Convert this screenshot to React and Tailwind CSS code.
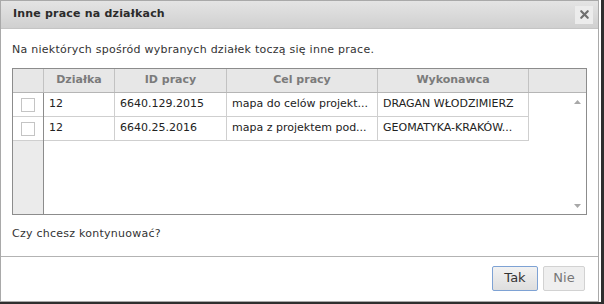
import { X } from 'lucide-react';

const rows = [
  { dzialka: '12', id: '6640.129.2015', cel: 'mapa do celów projekt...', wyk: 'DRAGAN WŁODZIMIERZ' },
  { dzialka: '12', id: '6640.25.2016', cel: 'mapa z projektem pod...', wyk: 'GEOMATYKA-KRAKÓW...' },
];

function Cell({ className = '', children }) {
  return (
    <div className={`h-full flex items-center px-[5px] border-r border-[#cfcfcf] overflow-hidden whitespace-nowrap ${className}`}>
      {children}
    </div>
  );
}

export default function App() {
  return (
    <div
      className="w-[604px] h-[304px] bg-white border-r-[3px] border-b-[2px] border-[#2f2f2f] text-[#333]"
      style={{ fontFamily: 'Verdana, "DejaVu Sans", sans-serif' }}
    >
      <div className="w-[599px] h-[302px] border border-[#a9a9a9] flex flex-col">
        {/* title */}
        <div className="h-[28px] flex items-center justify-between pl-[12px] pr-[5px] bg-gradient-to-b from-[#e4e4e4] to-[#d0d0d0] border-b border-[#c4c4c4]">
          <span className="text-[11px] font-bold text-[#2b2b2b] tracking-[0.2px]">Inne prace na działkach</span>
          <div className="w-[18px] h-[18px] bg-[#ececec] flex items-center justify-center">
            <X size={13} strokeWidth={4} className="text-[#6f6f6f]" />
          </div>
        </div>

        {/* body */}
        <div className="flex-1 px-[11px] pt-[14px] text-[11px]">
          <p className="leading-[14px] tracking-[0.25px]">Na niektórych spośród wybranych działek toczą się inne prace.</p>

          <div className="mt-[11px] h-[147px] border border-[#8c8c8c] flex flex-col">
            <div className="h-[24px] flex bg-[#e7e7e7] border-b border-[#b5b5b5] font-bold text-[#7b7b7b]">
              <div className="w-[31px] border-r border-[#c2c2c2]" />
              <div className="w-[71px] border-r border-[#c2c2c2] flex items-center justify-center">Działka</div>
              <div className="w-[112px] border-r border-[#c2c2c2] flex items-center justify-center">ID pracy</div>
              <div className="w-[151px] border-r border-[#c2c2c2] flex items-center justify-center">Cel pracy</div>
              <div className="w-[151px] border-r border-[#c2c2c2] flex items-center justify-center">Wykonawca</div>
              <div className="flex-1" />
            </div>

            <div className="flex-1 flex">
              <div className="w-[31px] bg-[#ebebeb] border-r border-[#8c8c8c] flex flex-col">
                {rows.map((r, i) => (
                  <div key={i} className="h-[24px] bg-white border-b border-[#cfcfcf] flex items-center justify-center">
                    <div className="w-[14px] h-[14px] border border-[#c4c4c4] bg-white" />
                  </div>
                ))}
              </div>
              <div className="flex-1 flex">
                <div className="flex flex-col">
                  {rows.map((r, i) => (
                    <div key={i} className="h-[24px] flex border-b border-[#cfcfcf] text-[#222]">
                      <Cell className="w-[71px]">{r.dzialka}</Cell>
                      <Cell className="w-[112px]">{r.id}</Cell>
                      <Cell className="w-[151px]">{r.cel}</Cell>
                      <Cell className="w-[151px]">{r.wyk}</Cell>
                    </div>
                  ))}
                </div>
                <div className="flex-1 flex justify-end">
                  <div className="w-[17px] flex flex-col justify-between items-center pt-[7px] pb-[6px]">
                    <svg width="7" height="4" viewBox="0 0 7 4"><path d="M0 4 L3.5 0 L7 4 Z" fill="#a8a8a8" /></svg>
                    <svg width="7" height="4" viewBox="0 0 7 4"><path d="M0 0 L3.5 4 L7 0 Z" fill="#a8a8a8" /></svg>
                  </div>
                </div>
              </div>
            </div>
          </div>

          <p className="mt-[12px] leading-[14px] tracking-[0.25px]">Czy chcesz kontynuować?</p>
        </div>

        {/* footer */}
        <div className="h-[45px] border-t border-[#b3b3b3] flex items-center justify-end gap-[5px] pr-[13px] pb-[2px] text-[13px]">
          <button className="w-[46px] h-[25px] rounded-[2px] border border-[#7ea2d4] bg-gradient-to-b from-[#f2f2f2] to-[#dedede] text-[#333]">Tak</button>
          <button className="w-[42px] h-[25px] rounded-[2px] border border-[#d2d2d2] bg-[#efefef] text-[#777]">Nie</button>
        </div>
      </div>
    </div>
  );
}
